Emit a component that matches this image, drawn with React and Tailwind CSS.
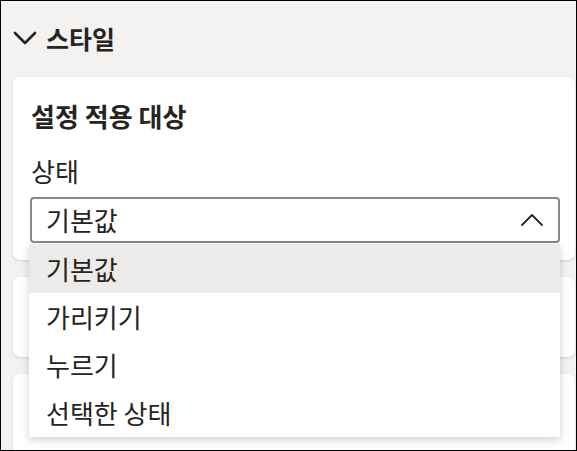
import React from "react";

const font = { fontFamily: '"Noto Sans CJK KR", "Noto Sans", sans-serif' };

function ChevronDown() {
  return (
    <svg width="24" height="16" viewBox="0 0 24 16" fill="none">
      <path d="M2 3 L12 13 L22 3" stroke="#252423" strokeWidth="2.6" strokeLinecap="round" strokeLinejoin="round" />
    </svg>
  );
}

function ChevronUp() {
  return (
    <svg width="24" height="14" viewBox="0 0 24 14" fill="none">
      <path d="M2 12 L12 2 L22 12" stroke="#252423" strokeWidth="1.8" strokeLinecap="round" strokeLinejoin="round" />
    </svg>
  );
}

const items = ["기본값", "가리키기", "누르기", "선택한 상태"];

export default function App() {
  return (
    <div
      className="w-[577px] h-[451px] border border-black bg-[#f3f2f1] overflow-hidden text-[#252423]"
      style={font}
    >
      <div className="flex items-center h-[76px] pl-[12px] pb-[2px]">
        <ChevronDown />
        <span className="ml-[9px] text-[25px] font-bold leading-none">스타일</span>
      </div>
      <div className="flex flex-col gap-[17px] pl-[12px] pr-[1px]">
        <div className="relative bg-white rounded-[7px] shadow-[0_1px_3px_rgba(0,0,0,0.14)] h-[183px] pl-[17px] pr-[15px]">
          <div className="h-[80px] flex items-center pl-[1px] pb-[2px] text-[26px] font-bold leading-none">
            설정 적용 대상
          </div>
          <div className="h-[40px] flex items-center pl-[1px] pb-[12px] text-[26px] leading-none">
            상태
          </div>
          <div className="h-[46px] border-2 border-[#8a8886] rounded-[4px] flex items-center justify-between pl-[14px] pr-[14px]">
            <span className="text-[26px] leading-none pb-[1px]">기본값</span>
            <ChevronUp />
          </div>
          <div className="absolute left-[16px] right-[15px] top-[167px] bg-white shadow-[0_3px_8px_rgba(0,0,0,0.18)] z-10">
            {items.map((t, i) => (
              <div
                key={t}
                className={
                  i === 0
                    ? "h-[49px] flex items-center pl-[17px] bg-[#edebe9] text-[26px] leading-none"
                    : "h-[48px] flex items-center pl-[17px] text-[26px] leading-none"
                }
              >
                {t}
              </div>
            ))}
          </div>
        </div>
        <div className="bg-white rounded-[7px] shadow-[0_1px_3px_rgba(0,0,0,0.14)] h-[80px]" />
        <div className="bg-white rounded-[7px] shadow-[0_1px_3px_rgba(0,0,0,0.14)] h-[120px]" />
      </div>
    </div>
  );
}
